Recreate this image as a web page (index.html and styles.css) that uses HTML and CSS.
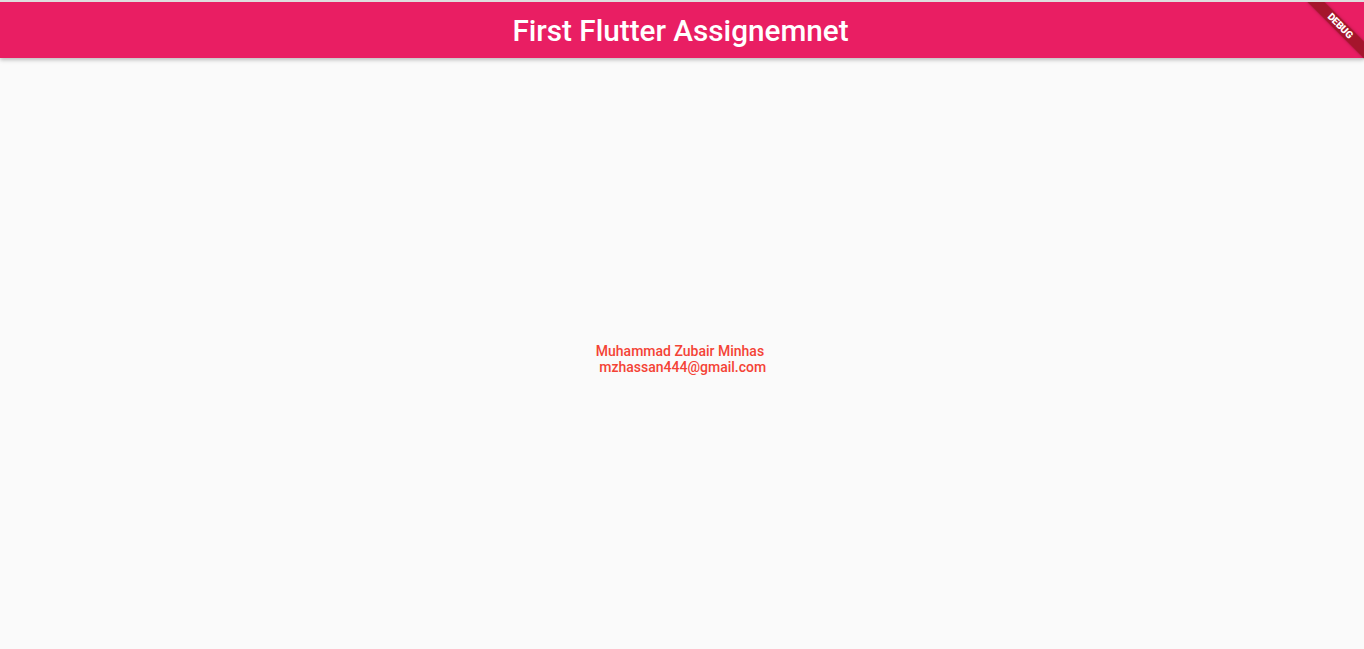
FILE: index.html
```html
<!DOCTYPE html>
<html>
<head>
<meta charset="utf-8">
<link rel="stylesheet" href="styles.css">
</head>
<body>
<div class="app">
  <header class="appbar">
    <h1 class="title">First Flutter Assignemnet</h1>
  </header>
  <main class="content">
    <div class="info">Muhammad Zubair Minhas
 mzhassan444@gmail.com</div>
  </main>
  <div class="banner"><span>DEBUG</span></div>
</div>
</body>
</html>
```

FILE: styles.css
```css
html, body {
  margin: 0;
  padding: 0;
  height: 100%;
}
body {
  background: #fafafa;
  font-family: Roboto, "Liberation Sans", sans-serif;
}
.app {
  position: relative;
  height: 100%;
  overflow: hidden;
  display: flex;
  flex-direction: column;
  border-top: 2px solid #dedede;
  box-sizing: border-box;
}
.appbar {
  height: 56px;
  background: #e91e63;
  display: flex;
  align-items: center;
  justify-content: center;
  box-shadow: 0 2px 4px rgba(0,0,0,0.25);
  position: relative;
  z-index: 1;
}
.title {
  margin: 0 0 0 -3px;
  color: #fff;
  font-size: 29.7px;
  font-weight: 500;
}
.content {
  flex: 1;
  display: flex;
  align-items: center;
  justify-content: center;
}
.info {
  white-space: pre;
  color: #f44336;
  font-size: 14px;
  font-weight: 500;
  line-height: 16px;
  margin: 10px 2px 0 0;
}
.banner {
  position: absolute;
  top: 18px;
  right: -16px;
  width: 80px;
  height: 12px;
  background: rgba(150, 20, 32, 0.82);
  transform: rotate(45deg);
  display: flex;
  align-items: center;
  justify-content: center;
  z-index: 2;
  box-shadow: 0 0 3px rgba(0,0,0,0.3);
}
.banner span {
  color: #fff;
  font-size: 10px;
  font-weight: 900;
  line-height: 1;
  letter-spacing: -0.2px;
}
```
